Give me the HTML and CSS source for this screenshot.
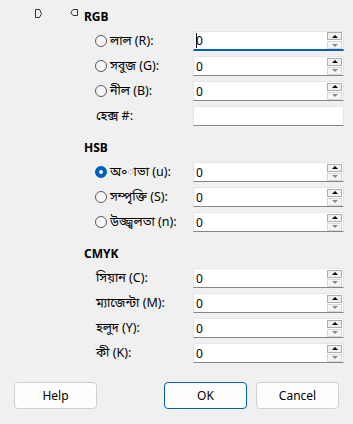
FILE: index.html
```html
<!DOCTYPE html>
<html lang="bn">
<head>
    <meta charset="UTF-8">
    <title>রং বাছাই</title>
    <link rel="stylesheet" href="styles.css">
</head>
<body>
    <div class="dialog">
        <div class="main">
            <div class="marks">
                <svg class="mark" width="8" height="9" viewBox="0 0 8 9">
                    <path d="M0.5 0.5 H4.5 L6.5 4.5 L4.5 8.5 H0.5 Z" fill="none" stroke="#333" stroke-width="1"/>
                </svg>
                <svg class="mark mark-left" width="8" height="8" viewBox="0 0 8 8">
                    <path d="M7.5 0.5 H3 L0.8 3.5 L3 6.5 H7.5 Z" fill="none" stroke="#333" stroke-width="1"/>
                </svg>
            </div>

            <div class="panel">
                <section class="group">
                    <h2>RGB</h2>
                    <div class="row">
                        <label class="opt"><span class="radio"></span>লাল (R):</label>
                        <div class="field focused">
                            <span class="val"><span class="caret"></span>0</span>
                            <div class="spin"><span class="up"></span><span class="down"></span></div>
                        </div>
                    </div>
                    <div class="row">
                        <label class="opt"><span class="radio"></span>সবুজ (G):</label>
                        <div class="field">
                            <span class="val">0</span>
                            <div class="spin"><span class="up"></span><span class="down"></span></div>
                        </div>
                    </div>
                    <div class="row">
                        <label class="opt"><span class="radio"></span>নীল (B):</label>
                        <div class="field">
                            <span class="val">0</span>
                            <div class="spin"><span class="up"></span><span class="down"></span></div>
                        </div>
                    </div>
                    <div class="row">
                        <label class="plain">হেক্স #:</label>
                        <div class="field">
                            <span class="val"></span>
                        </div>
                    </div>
                </section>

                <section class="group">
                    <h2>HSB</h2>
                    <div class="row">
                        <label class="opt"><span class="radio checked"></span>অ৹াভা (u):</label>
                        <div class="field">
                            <span class="val">0</span>
                            <div class="spin"><span class="up"></span><span class="down"></span></div>
                        </div>
                    </div>
                    <div class="row">
                        <label class="opt"><span class="radio"></span>সম্পৃক্তি (S):</label>
                        <div class="field">
                            <span class="val">0</span>
                            <div class="spin"><span class="up"></span><span class="down"></span></div>
                        </div>
                    </div>
                    <div class="row">
                        <label class="opt"><span class="radio"></span>উজ্জ্বলতা (n):</label>
                        <div class="field">
                            <span class="val">0</span>
                            <div class="spin"><span class="up"></span><span class="down"></span></div>
                        </div>
                    </div>
                </section>

                <section class="group">
                    <h2>CMYK</h2>
                    <div class="row">
                        <label class="plain">সিয়ান (C):</label>
                        <div class="field">
                            <span class="val">0</span>
                            <div class="spin"><span class="up"></span><span class="down"></span></div>
                        </div>
                    </div>
                    <div class="row">
                        <label class="plain">ম্যাজেন্টা (M):</label>
                        <div class="field">
                            <span class="val">0</span>
                            <div class="spin"><span class="up"></span><span class="down"></span></div>
                        </div>
                    </div>
                    <div class="row">
                        <label class="plain">হলুদ (Y):</label>
                        <div class="field">
                            <span class="val">0</span>
                            <div class="spin"><span class="up"></span><span class="down"></span></div>
                        </div>
                    </div>
                    <div class="row">
                        <label class="plain">কী (K):</label>
                        <div class="field">
                            <span class="val">0</span>
                            <div class="spin"><span class="up"></span><span class="down"></span></div>
                        </div>
                    </div>
                </section>
            </div>
        </div>

        <div class="buttons">
            <button class="btn">Help</button>
            <span class="spacer"></span>
            <button class="btn default">OK</button>
            <button class="btn">Cancel</button>
        </div>
    </div>
</body>
</html>
```

FILE: styles.css
```css
:root {
    --bg: #f0f0f0;
    --accent: #005fb8;
    --line: #868686;
    --text: #000;
}

body {
    margin: 0;
    width: 353px;
    height: 424px;
    background-color: var(--bg);
    color: var(--text);
    font-family: 'Noto Sans', 'Noto Sans Bengali', 'Lohit Bengali', sans-serif;
    font-size: 12px;
    overflow: hidden;
}

.main {
    display: flex;
    padding-top: 9px;
}

.marks {
    width: 84px;
    flex-shrink: 0;
    display: flex;
    align-items: flex-start;
    padding-left: 35px;
    box-sizing: border-box;
}

.mark-left {
    margin-left: 27px;
}

.panel {
    flex: 1;
    padding-right: 9px;
}

.group + .group {
    margin-top: 14px;
}

.group h2 {
    margin: 0 0 6px 0;
    height: 16px;
    line-height: 16px;
    font-size: 12px;
    font-weight: bold;
}

.row {
    display: flex;
    align-items: center;
    height: 20px;
    margin-bottom: 5px;
}

.row:last-child {
    margin-bottom: 0;
}

.row label {
    width: 109px;
    flex-shrink: 0;
    box-sizing: border-box;
    display: flex;
    align-items: center;
    white-space: nowrap;
    font-size: 12.5px;
}

.opt {
    padding-left: 11px;
}

.plain {
    padding-left: 12px;
}

.radio {
    width: 12px;
    height: 12px;
    margin-right: 3px;
    border: 1px solid #5a5a5a;
    border-radius: 50%;
    box-sizing: border-box;
    background-color: #f6f6f6;
}

.radio.checked {
    border: 4px solid var(--accent);
    background-color: #fff;
}

.field {
    flex: 1;
    height: 20px;
    box-sizing: border-box;
    display: flex;
    align-items: center;
    background-color: #fff;
    border: 1px solid #e5e5e5;
    border-bottom: 1px solid var(--line);
}

.field.focused {
    border-bottom: 2px solid var(--accent);
}

.val {
    flex: 1;
    padding-left: 2px;
    font-family: 'Noto Sans', sans-serif;
    font-size: 12px;
    display: flex;
    align-items: center;
}

.caret {
    width: 1px;
    height: 15px;
    background-color: #000;
    margin-right: -1px;
}

.spin {
    display: flex;
    flex-direction: column;
    gap: 1px;
    margin-right: 1px;
}

.spin span {
    width: 15px;
    height: 8px;
    box-sizing: border-box;
    display: flex;
    align-items: center;
    justify-content: center;
}

.spin .up {
    border: 1px solid #adadad;
    background-color: #f0f0f0;
}

.spin .down {
    border: 1px solid #d6d6d6;
    background-color: #f5f5f5;
}

.spin .up::after {
    content: '';
    border-left: 3px solid transparent;
    border-right: 3px solid transparent;
    border-bottom: 3px solid #000;
}

.spin .down::after {
    content: '';
    border-left: 3px solid transparent;
    border-right: 3px solid transparent;
    border-top: 3px solid #8a8a8a;
}

.buttons {
    display: flex;
    gap: 9px;
    padding: 0 14px;
    margin-top: 19px;
}

.spacer {
    flex: 1;
}

.btn {
    width: 83px;
    height: 27px;
    box-sizing: border-box;
    background-color: #fdfdfd;
    border: 1px solid #d0d0d0;
    border-radius: 4px;
    font-family: 'Noto Sans', sans-serif;
    font-size: 12px;
    color: #000;
    padding: 0;
}

.btn.default {
    border-color: var(--accent);
}
```
